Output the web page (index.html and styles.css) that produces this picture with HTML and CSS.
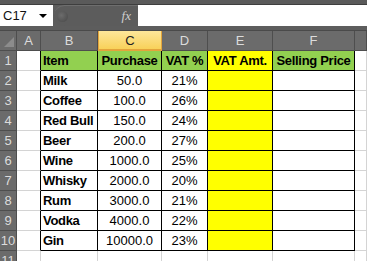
FILE: index.html
```html
<!DOCTYPE html>
<html lang="en">

<head>
    <meta charset="UTF-8">
    <title>VAT Sheet</title>
    <link rel="stylesheet" href="styles.css">
</head>

<body>
    <div class="ribbon-edge"></div>
    <div class="formula-bar">
        <div class="name-box">C17<span class="drop"></span></div>
        <div class="fx-pill"><span class="knob"></span><span class="fx">fx</span></div>
        <div class="formula-input"></div>
    </div>
    <div class="bar-gap"></div>

    <div class="sheet">
        <!-- column headers -->
        <div class="cell head corner"><span class="tri"></span></div>
        <div class="cell head">A</div>
        <div class="cell head">B</div>
        <div class="cell head active">C</div>
        <div class="cell head">D</div>
        <div class="cell head">E</div>
        <div class="cell head">F</div>
        <div class="cell head"></div>

        <!-- row 1 -->
        <div class="cell head">1</div>
        <div class="cell edge"></div>
        <div class="cell tbl green b">Item</div>
        <div class="cell tbl green b ctr">Purchase</div>
        <div class="cell tbl green b ctr">VAT %</div>
        <div class="cell tbl yellow b ctr">VAT Amt.</div>
        <div class="cell tbl green b ctr">Selling Price</div>
        <div class="cell"></div>

        <div class="cell head">2</div>
        <div class="cell edge"></div>
        <div class="cell tbl b">Milk</div>
        <div class="cell tbl ctr">50.0</div>
        <div class="cell tbl ctr">21%</div>
        <div class="cell tbl yellow"></div>
        <div class="cell tbl"></div>
        <div class="cell"></div>

        <div class="cell head">3</div>
        <div class="cell edge"></div>
        <div class="cell tbl b">Coffee</div>
        <div class="cell tbl ctr">100.0</div>
        <div class="cell tbl ctr">26%</div>
        <div class="cell tbl yellow"></div>
        <div class="cell tbl"></div>
        <div class="cell"></div>

        <div class="cell head">4</div>
        <div class="cell edge"></div>
        <div class="cell tbl b">Red Bull</div>
        <div class="cell tbl ctr">150.0</div>
        <div class="cell tbl ctr">24%</div>
        <div class="cell tbl yellow"></div>
        <div class="cell tbl"></div>
        <div class="cell"></div>

        <div class="cell head">5</div>
        <div class="cell edge"></div>
        <div class="cell tbl b">Beer</div>
        <div class="cell tbl ctr">200.0</div>
        <div class="cell tbl ctr">27%</div>
        <div class="cell tbl yellow"></div>
        <div class="cell tbl"></div>
        <div class="cell"></div>

        <div class="cell head">6</div>
        <div class="cell edge"></div>
        <div class="cell tbl b">Wine</div>
        <div class="cell tbl ctr">1000.0</div>
        <div class="cell tbl ctr">25%</div>
        <div class="cell tbl yellow"></div>
        <div class="cell tbl"></div>
        <div class="cell"></div>

        <div class="cell head">7</div>
        <div class="cell edge"></div>
        <div class="cell tbl b">Whisky</div>
        <div class="cell tbl ctr">2000.0</div>
        <div class="cell tbl ctr">20%</div>
        <div class="cell tbl yellow"></div>
        <div class="cell tbl"></div>
        <div class="cell"></div>

        <div class="cell head">8</div>
        <div class="cell edge"></div>
        <div class="cell tbl b">Rum</div>
        <div class="cell tbl ctr">3000.0</div>
        <div class="cell tbl ctr">21%</div>
        <div class="cell tbl yellow"></div>
        <div class="cell tbl"></div>
        <div class="cell"></div>

        <div class="cell head">9</div>
        <div class="cell edge"></div>
        <div class="cell tbl b">Vodka</div>
        <div class="cell tbl ctr">4000.0</div>
        <div class="cell tbl ctr">22%</div>
        <div class="cell tbl yellow"></div>
        <div class="cell tbl"></div>
        <div class="cell"></div>

        <div class="cell head">10</div>
        <div class="cell edge"></div>
        <div class="cell tbl b">Gin</div>
        <div class="cell tbl ctr">10000.0</div>
        <div class="cell tbl ctr">23%</div>
        <div class="cell tbl yellow"></div>
        <div class="cell tbl"></div>
        <div class="cell"></div>

        <div class="cell head">11</div>
        <div class="cell"></div>
        <div class="cell"></div>
        <div class="cell"></div>
        <div class="cell"></div>
        <div class="cell"></div>
        <div class="cell"></div>
        <div class="cell"></div>
    </div>
</body>

</html>
```

FILE: styles.css
```css
body {
    margin: 0;
    width: 367px;
    height: 261px;
    overflow: hidden;
    background: #fff;
    font-family: "Liberation Sans", Arial, sans-serif;
    color: #000;
}

.ribbon-edge {
    height: 5px;
    background: #5a5a5a;
    border-bottom: 1px solid #3e3e3e;
    box-sizing: border-box;
}

.formula-bar {
    display: flex;
    height: 21px;
    background: #5d5d5d;
}

.name-box {
    width: 53px;
    box-sizing: border-box;
    padding-left: 3px;
    background: #fff;
    display: flex;
    align-items: center;
    font-size: 13px;
    color: #111;
}

.drop {
    margin-left: auto;
    margin-right: 6px;
    width: 0;
    height: 0;
    border-left: 4px solid transparent;
    border-right: 4px solid transparent;
    border-top: 4px solid #000;
}

.fx-pill {
    width: 84px;
    margin-left: 1px;
    background: #5c5c5c;
    border-top: 1px solid #6e6e6e;
    border-radius: 11px 0 0 11px;
    box-sizing: border-box;
    display: flex;
    align-items: center;
}

.knob {
    width: 11px;
    height: 11px;
    margin-left: 3px;
    border-radius: 50%;
    background: radial-gradient(circle at 40% 40%, #6c6c6c, #474747);
}

.fx {
    margin-left: auto;
    margin-right: 7px;
    font-family: "Liberation Serif", serif;
    font-style: italic;
    font-size: 13px;
    color: #cfcfcf;
}

.formula-input {
    flex: 1;
    background: #fff;
}

.bar-gap {
    height: 5px;
    background: #5d5d5d;
    border-bottom: 1px solid #4a4a4a;
    box-sizing: border-box;
}

.sheet {
    display: grid;
    grid-template-columns: 17px 24px 57px 64px 46px 65px 82px 1fr;
    grid-auto-rows: 20px;
}

.cell {
    box-sizing: border-box;
    border-right: 1px solid #d4d4d4;
    border-bottom: 1px solid #d4d4d4;
    padding: 0 2px;
    display: flex;
    align-items: center;
    font-size: 13px;
    white-space: nowrap;
    overflow: hidden;
}

.head {
    padding: 0;
    justify-content: center;
    background: #6b6b6b;
    color: #dcdcdc;
    border-color: #4e4e4e;
}

.head.active {
    background: linear-gradient(#fde69a, #f8d15a);
    color: #222;
    border-left: 1px solid #e3a43c;
    border-right: 1px solid #e3a43c;
    border-bottom: 2px solid #e3a43c;
}

.corner {
    position: relative;
}

.tri {
    position: absolute;
    right: 2px;
    bottom: 3px;
    width: 0;
    height: 0;
    border-left: 10px solid transparent;
    border-bottom: 10px solid #8c8c8c;
}

.edge {
    border-right-color: #000;
}

.tbl {
    border-color: #000;
}

.green {
    background: #92d050;
}

.yellow {
    background: #ffff00;
}

.b {
    font-weight: bold;
    letter-spacing: -0.3px;
}

.ctr {
    justify-content: center;
}
```
